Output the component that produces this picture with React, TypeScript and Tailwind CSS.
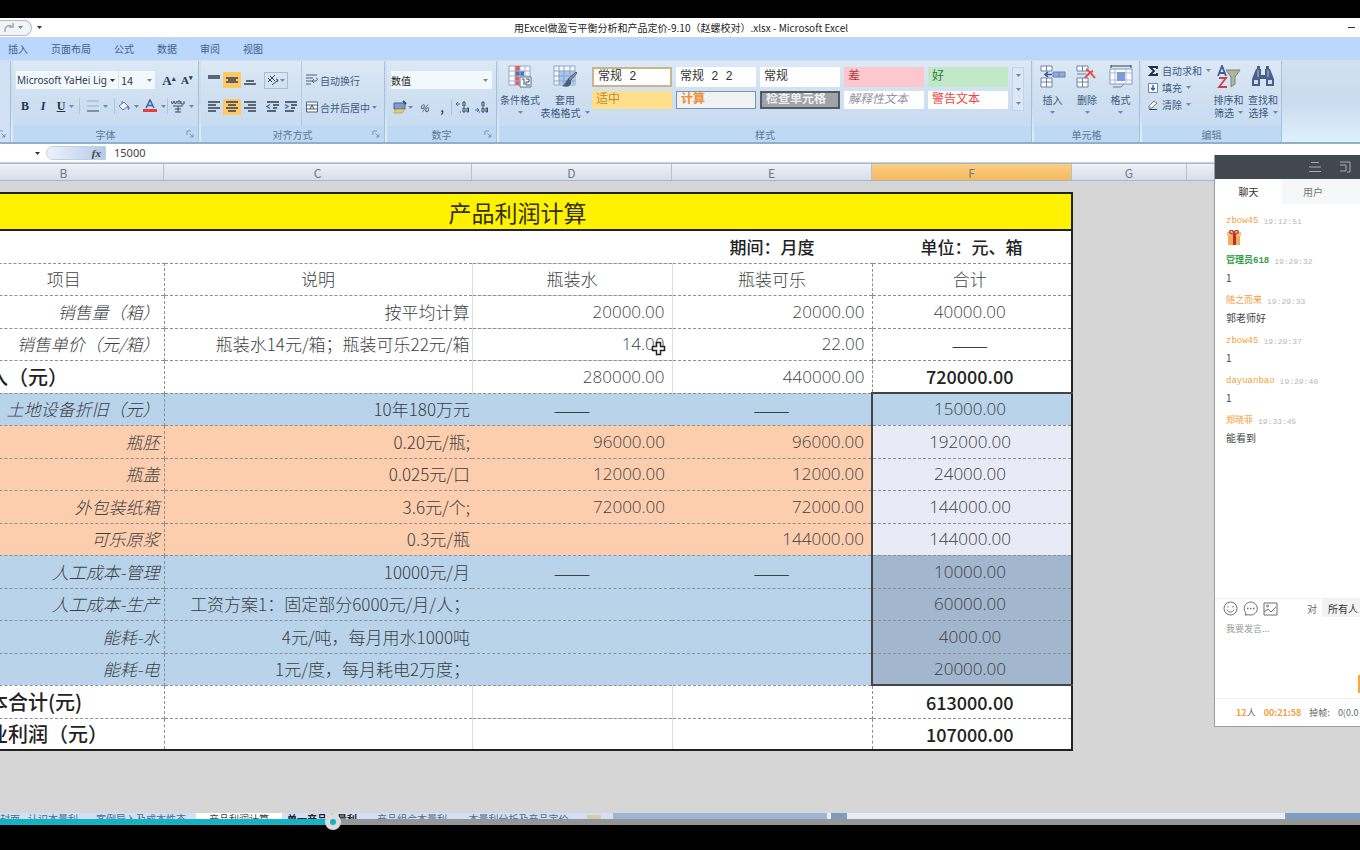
import React, { useState } from 'react';

type Tone = 'plain' | 'blue' | 'orange';

interface SheetRow {
    item: string;
    note?: string;
    water?: string;
    cola?: string;
    total?: string;
    tone: Tone;
    kind?: 'head' | 'sum';
    selected?: 'first' | 'middle' | 'last';
}

const DASH = '——';

const rows: SheetRow[] = [
    { item: '项目', note: '说明', water: '瓶装水', cola: '瓶装可乐', total: '合计', tone: 'plain', kind: 'head' },
    { item: '销售量（箱）', note: '按平均计算', water: '20000.00', cola: '20000.00', total: '40000.00', tone: 'plain' },
    { item: '销售单价（元/箱）', note: '瓶装水14元/箱；瓶装可乐22元/箱', water: '14.00', cola: '22.00', total: DASH, tone: 'plain' },
    { item: '收入（元）', water: '280000.00', cola: '440000.00', total: '720000.00', tone: 'plain', kind: 'sum' },
    { item: '土地设备折旧（元）', note: '10年180万元', water: DASH, cola: DASH, total: '15000.00', tone: 'blue', selected: 'first' },
    { item: '瓶胚', note: '0.20元/瓶;', water: '96000.00', cola: '96000.00', total: '192000.00', tone: 'orange', selected: 'middle' },
    { item: '瓶盖', note: '0.025元/口', water: '12000.00', cola: '12000.00', total: '24000.00', tone: 'orange', selected: 'middle' },
    { item: '外包装纸箱', note: '3.6元/个;', water: '72000.00', cola: '72000.00', total: '144000.00', tone: 'orange', selected: 'middle' },
    { item: '可乐原浆', note: '0.3元/瓶', cola: '144000.00', total: '144000.00', tone: 'orange', selected: 'middle' },
    { item: '人工成本-管理', note: '10000元/月', water: DASH, cola: DASH, total: '10000.00', tone: 'blue', selected: 'middle' },
    { item: '人工成本-生产', note: '工资方案1：固定部分6000元/月/人；', total: '60000.00', tone: 'blue', selected: 'middle' },
    { item: '能耗-水', note: '4元/吨，每月用水1000吨', total: '4000.00', tone: 'blue', selected: 'middle' },
    { item: '能耗-电', note: '1元/度，每月耗电2万度；', total: '20000.00', tone: 'blue', selected: 'last' },
    { item: '成本合计(元)', total: '613000.00', tone: 'plain', kind: 'sum' },
    { item: '营业利润（元）', total: '107000.00', tone: 'plain', kind: 'sum' },
];

const toneClass: Record<Tone, string> = {
    plain: 'bg-white',
    blue: 'bg-[#b8d3ea]',
    orange: 'bg-[#fdceae]',
};

const cellStyles = [
    { label: '常规 2', cls: 'bg-white border-2 border-[#c9b48c] text-[#333]' },
    { label: '常规 2 2', cls: 'bg-white text-[#333]' },
    { label: '常规', cls: 'bg-white text-[#333]' },
    { label: '差', cls: 'bg-[#fdc8cd] text-[#b3303c]' },
    { label: '好', cls: 'bg-[#c0e8c6] text-[#2f7a3f]' },
    { label: '适中', cls: 'bg-[#ffdf8c] text-[#bd8a2b]' },
    { label: '计算', cls: 'bg-[#f1f2f3] border border-[#7d93ad] text-[#f58a2c] font-bold' },
    { label: '检查单元格', cls: 'bg-[#a0a3a8] border-2 border-[#565a60] text-[#eef0f2] font-bold' },
    { label: '解释性文本', cls: 'bg-white text-[#8f9499] italic' },
    { label: '警告文本', cls: 'bg-white text-[#f0453f]' },
];

const messages = [
    { name: 'zbow45', time: '19:12:51', text: '', color: 'text-[#f2a13c]' },
    { name: '管理员618', time: '19:29:32', text: '1', color: 'text-[#2f9e45] font-bold' },
    { name: '随之而来', time: '19:29:33', text: '郭老师好', color: 'text-[#f2a13c]' },
    { name: 'zbow45', time: '19:29:37', text: '1', color: 'text-[#f2a13c]' },
    { name: 'dayuanbao', time: '19:29:40', text: '1', color: 'text-[#f2a13c]' },
    { name: '郑晓菲', time: '19:33:45', text: '能看到', color: 'text-[#f2a13c]' },
];

const Caret: React.FC<{ dark?: boolean }> = ({ dark }) => (
    <svg className="h-[3px] w-[5px] shrink-0" viewBox="0 0 5 3">
        <path d="M0 0h5L2.5 3z" fill={dark ? '#333' : '#7389a6'} />
    </svg>
);

const Sep = () => <span className="h-4 w-px shrink-0 bg-[#aec3dc]" />;

const Launcher = () => (
    <svg className="absolute right-1 bottom-1 h-2 w-2" viewBox="0 0 8 8" fill="none" stroke="#7f95b2">
        <path d="M1 5V1h4M3.500 3.500L7 7M7 4v3H4" />
    </svg>
);

interface GroupProps {
    label: string;
    width: string;
    launcher?: boolean;
    children?: React.ReactNode;
}

const Group: React.FC<GroupProps> = ({ label, width, launcher, children }) => (
    <section className={`relative flex shrink-0 flex-col border-r border-[#a9c0db] bg-gradient-to-b from-[#dce8f5] via-[#cddff1] to-[#c5dbf3] ${width}`}>
        <div className="flex flex-1">{children}</div>
        <div className="flex h-4 items-center justify-center bg-[#bfd8f4] text-[10px] text-[#5d7697]">{label}</div>
        {launcher && <Launcher />}
    </section>
);

// Three or four horizontal strokes, shared by all alignment buttons
const Lines: React.FC<{ rows: [number, number, number][] }> = ({ rows }) => (
    <svg className="h-3 w-[14px]" viewBox="0 0 14 12" stroke="#333d4d" strokeWidth="1.500">
        {rows.map(([x1, x2, y]) => <path key={y} d={`M${x1} ${y}H${x2}`} />)}
    </svg>
);

const alignTop: [number, number, number][] = [[1, 13, 2], [1, 13, 4]];
const alignMid: [number, number, number][] = [[1, 13, 4], [3, 11, 6], [1, 13, 8]];
const alignBottom: [number, number, number][] = [[3, 11, 7], [1, 13, 10]];
const alignLeft: [number, number, number][] = [[1, 13, 1], [1, 9, 4], [1, 13, 7], [1, 9, 10]];
const alignCenter: [number, number, number][] = [[1, 13, 1], [3, 11, 4], [1, 13, 7], [3, 11, 10]];
const alignRight: [number, number, number][] = [[1, 13, 1], [5, 13, 4], [1, 13, 7], [5, 13, 10]];

const Indent: React.FC<{ flip?: boolean }> = ({ flip }) => (
    <svg className="h-3 w-[14px]" viewBox="0 0 14 12" fill="none" stroke="#333d4d" strokeWidth="1.500">
        <path d="M1 1h12M7 4h6M7 7h4M1 10h9" />
        <path d={flip ? 'M1 3.500L4 5.500L1 7.500' : 'M4 3.500L1 5.500L4 7.500'} stroke="#4470ad" />
    </svg>
);

const AlignButton: React.FC<{ label: string; active?: boolean; children: React.ReactNode }> = ({ label, active, children }) => (
    <button aria-label={label} className={`flex h-4 w-[18px] items-center justify-center ${active ? 'bg-[#fdc866]' : ''}`}>
        {children}
    </button>
);

const BigButton: React.FC<{ icon: React.ReactNode; lines: string[]; width: string }> = ({ icon, lines, width }) => (
    <button className={`flex flex-col items-center pt-1 text-[10px] leading-[13px] text-[#3f597f] ${width}`}>
        {icon}
        <span className="mt-1 whitespace-nowrap">{lines[0]}</span>
        <span className="flex h-[13px] items-center gap-1 whitespace-nowrap">
            {lines[1]}
            <Caret />
        </span>
    </button>
);

const CondFormatIcon = () => (
    <svg className="h-6 w-6" viewBox="0 0 24 24">
        <path d="M1 1h21v19H1z" fill="#fff" stroke="#8fa5c4" />
        <path d="M7 1h5v5H7zM7 11h4v9H7z" fill="#ee5a55" />
        <path d="M7 6h9v5H7z" fill="#4c74b6" />
        <path d="M1 6h21M1 11h21M1 16h21M7 1v19M12 1v19M17 1v19" stroke="#9fb3ce" fill="none" />
        <path d="M12 12h11v10H12z" fill="#fff" stroke="#5a6f93" />
        <path d="M14 14h2v6M18 14h3v3h-3v3h4" fill="none" stroke="#33466b" />
    </svg>
);

const TableFormatIcon = () => (
    <svg className="h-6 w-6" viewBox="0 0 24 24">
        <path d="M1 1h21v19H1z" fill="#f5f9fe" stroke="#8fa5c4" />
        <path d="M6 6h16v14H6z" fill="#a9c8ef" />
        <path d="M1 6h21M1 11h21M1 16h21M6 1v19M11 1v19M17 1v19" stroke="#88a3c8" fill="none" />
        <path d="M24 8l-7 8-2-2 8-7z" fill="#8a8f98" stroke="#555f70" />
        <path d="M16 14c-3 0-3 5-7 7 5 2 10 0 9-5z" fill="#4b5e80" />
    </svg>
);

const InsertIcon = () => (
    <svg className="h-6 w-7" viewBox="0 0 28 24" fill="#fff" stroke="#6d82a3">
        <path d="M2 1h11v5H2zM2 13h11v9H2zM7.500 1v5M7.500 13v9M2 17h11" />
        <path d="M14 7h12v5H14zM20 7v5" fill="#8eabdc" stroke="#6580b3" />
        <path d="M13 9.500H6m3-2.500L6 9.500 9 12" fill="none" stroke="#35558e" strokeWidth="1.500" />
    </svg>
);

const DeleteIcon = () => (
    <svg className="h-6 w-6" viewBox="0 0 24 24" fill="#fff" stroke="#6d82a3">
        <path d="M2 1h11v5H2zM2 13h11v9H2zM7.500 1v5M7.500 13v9M2 17h11M2 9h9" />
        <path d="M11 4c3 2 6 5 9 9M18 6c-3 1-5 3-8 7" fill="none" stroke="#ea4b45" strokeWidth="2" />
    </svg>
);

const FormatIcon = () => (
    <svg className="h-6 w-6" viewBox="0 0 24 24">
        <path d="M2 1h20M2 0v3M22 0v3" stroke="#33415c" fill="none" />
        <path d="M1 4h22v15H1z" fill="#fff" stroke="#8096b8" />
        <path d="M6 4v15M17 4v15M1 8h22M1 15h22" stroke="#a9bbd4" />
        <path d="M8 7h8v9H8z" fill="#7d9adb" />
        <path d="M4 22h8l3-3" stroke="#6d7f9a" fill="none" />
    </svg>
);

const SortIcon = () => (
    <svg className="h-6 w-6" viewBox="0 0 24 24" fill="none">
        <path d="M9 5h14l-5 7v7l-4 3V12z" fill="#b1b39e" stroke="#80836f" />
        <path d="M1 11L5 1l4 10M3 8h5" stroke="#3d5ba0" strokeWidth="1.800" />
        <path d="M2 13h7l-7 9h8" stroke="#cf3f4a" strokeWidth="1.800" />
    </svg>
);

const FindIcon = () => (
    <svg className="h-6 w-6" viewBox="0 0 24 24" fill="#4c5f86">
        <path d="M5 4h5v6h4V4h5l4 10v7h-8v-7H9v7H1v-7z" />
        <path d="M6 1h3v3H6zM15 1h3v3h-3z" />
        <path d="M3 15h4v4H3zM17 15h4v4h-4z" fill="#cfdcf0" />
        <path d="M7 5v7M17 5v7" stroke="#b7c6e0" />
    </svg>
);

const Ribbon: React.FC = () => (
    <div className="flex h-[82px] gap-[2px] overflow-hidden bg-gradient-to-b from-[#d3e1f0] via-[#c9dbee] to-[#dff0fd] pt-px text-[#3f597f]">
        <section className="relative w-[11px] shrink-0 border-r border-[#a9c0db] bg-[#d0e1f3]">
            <Launcher />
        </section>
        <Group label="字体" width="w-[186px]" launcher>
            <div className="flex flex-1 flex-col gap-2 pt-[10px] pl-[3px]">
                <div className="flex h-[18px] items-center text-[#2b3a50]">
                    <label className="relative flex h-full w-[102px] items-center bg-[#f3f8fd] font-['Noto_Sans'] text-[10px]">
                        <select aria-label="字体" className="w-full appearance-none pl-px">
                            <option>Microsoft YaHei Lig</option>
                        </select>
                        <span className="absolute right-[3px]"><Caret dark /></span>
                    </label>
                    <label className="relative ml-px flex h-full w-9 items-center bg-[#f3f8fd] text-[11px]">
                        <select aria-label="字号" className="w-full appearance-none pl-[2px]">
                            <option>14</option>
                        </select>
                        <span className="absolute right-[3px]"><Caret /></span>
                    </label>
                    <button className="ml-[5px] w-[18px] font-['Liberation_Serif'] text-[13px] leading-none font-bold">A<sup className="text-[7px]">▴</sup></button>
                    <button className="w-[18px] font-['Liberation_Serif'] text-[11px] leading-none font-bold">A<sup className="text-[7px]">▾</sup></button>
                </div>
                <div className="flex h-[18px] items-center font-['Liberation_Serif'] text-[12px] text-[#26344b]">
                    <button className="w-[18px] font-bold">B</button>
                    <button className="w-[18px] font-bold italic">I</button>
                    <button className="flex w-[27px] items-center justify-center gap-1 font-bold underline">U<Caret /></button>
                    <Sep />
                    <button aria-label="边框" className="flex w-[34px] items-center justify-center gap-1">
                        <svg className="h-3 w-3" viewBox="0 0 12 12" fill="none" stroke="#9aaec8">
                            <path d="M0 1h12M0 6h12" />
                            <path d="M0 11h12" stroke="#3a475c" />
                        </svg>
                        <Caret />
                    </button>
                    <Sep />
                    <button aria-label="填充颜色" className="flex w-[26px] items-center justify-center gap-1">
                        <svg className="h-3 w-3" viewBox="0 0 12 12" fill="#eef4fb" stroke="#60789c">
                            <path d="M1 6l5-4 4 4-5 4zM4 4V1" />
                            <path d="M10 6c2 2 1 4 0 3z" fill="#4d74b8" />
                        </svg>
                        <Caret />
                    </button>
                    <button aria-label="字体颜色" className="flex w-[26px] items-center justify-center gap-1">
                        <svg className="h-[14px] w-[14px]" viewBox="0 0 14 14" fill="none">
                            <path d="M3 9l4-8 4 8M4.500 6.500h5" stroke="#3f62a8" strokeWidth="1.600" />
                            <path d="M0 10h14v3H0z" fill="#ee3b3b" />
                        </svg>
                        <Caret />
                    </button>
                    <Sep />
                    <button aria-label="拼音" className="flex w-[29px] items-center justify-center gap-1">
                        <svg className="h-[14px] w-[14px]" viewBox="0 0 14 14" fill="none" stroke="#3d4a60">
                            <path d="M0 2l1.500 3L3 2l1.500 3L6 2M7 5V2h2v3M10 2v3h3V2M2 7h10M7 7v6M4 10h6M4 13h6" />
                        </svg>
                        <Caret />
                    </button>
                </div>
            </div>
        </Group>
        <Group label="对齐方式" width="w-[184px]" launcher>
            <div className="flex flex-col gap-[11px] pt-[11px] pl-1">
                <div className="flex h-4 items-center">
                    <AlignButton label="顶端对齐"><Lines rows={alignTop} /></AlignButton>
                    <AlignButton label="垂直居中" active><Lines rows={alignMid} /></AlignButton>
                    <AlignButton label="底端对齐"><Lines rows={alignBottom} /></AlignButton>
                    <button aria-label="方向" className="ml-[5px] flex h-[17px] w-6 items-center justify-center gap-px border border-[#a9bdd7]">
                        <svg className="h-3 w-3" viewBox="0 0 12 12" fill="none" stroke="#3d4a60">
                            <path d="M1 4l4 4M3 2l5 5M1 8L8 1M5 11l6-5M9 5l2 1-1 2" />
                        </svg>
                        <Caret />
                    </button>
                </div>
                <div className="flex h-4 items-center">
                    <AlignButton label="左对齐"><Lines rows={alignLeft} /></AlignButton>
                    <AlignButton label="居中" active><Lines rows={alignCenter} /></AlignButton>
                    <AlignButton label="右对齐"><Lines rows={alignRight} /></AlignButton>
                    <span className="w-[5px]" />
                    <AlignButton label="减少缩进量"><Indent /></AlignButton>
                    <AlignButton label="增加缩进量"><Indent flip /></AlignButton>
                </div>
            </div>
            <div className="ml-px flex flex-col gap-[11px] border-l border-[#b6cae2] pt-[11px] pl-1 text-[10px]">
                <button className="flex h-4 items-center gap-[2px] whitespace-nowrap">
                    <svg className="h-3 w-3" viewBox="0 0 12 12" fill="none" stroke="#50617c">
                        <path d="M0 1h11M0 4h7M0 7h9c3 0 3-3 1-3M0 10h5M8 9L6 7l2-2" />
                    </svg>
                    自动换行
                </button>
                <button className="flex h-4 items-center gap-[2px] whitespace-nowrap">
                    <svg className="h-3 w-3" viewBox="0 0 12 12" fill="#fff" stroke="#50617c">
                        <path d="M0.500 1h11v10H.5zM.5 4h11M.5 8h11" />
                        <path d="M4 8l2-4 2 4" fill="none" stroke="#2a4880" />
                    </svg>
                    合并后居中
                    <Caret />
                </button>
            </div>
        </Group>
        <Group label="数字" width="w-[110px]" launcher>
            <div className="flex flex-1 flex-col gap-[10px] px-1 pt-[10px]">
                <label className="relative flex h-[18px] items-center bg-[#f3f8fd] text-[10px] text-[#222]">
                    <select aria-label="数字格式" className="w-full appearance-none">
                        <option>数值</option>
                    </select>
                    <span className="absolute right-1"><Caret /></span>
                </label>
                <div className="flex h-4 items-center text-[10px] text-[#26344b]">
                    <button aria-label="会计数字格式" className="flex w-6 items-center justify-center gap-px">
                        <svg className="h-[14px] w-[14px]" viewBox="0 0 14 14">
                            <path d="M1 3h11v6H1z" fill="#7e9bd0" stroke="#4a628f" />
                            <path d="M3 9h9l-3 4H1z" fill="#e6cb6c" stroke="#a68f44" strokeWidth=".6" />
                            <path d="M10 1l3 3" stroke="#3f4f6d" strokeWidth="2" />
                        </svg>
                        <Caret />
                    </button>
                    <button className="w-[18px] italic">%</button>
                    <button className="w-[18px] font-bold">,</button>
                    <Sep />
                    {['增加小数位数', '减少小数位数'].map((label, i) => (
                        <button key={label} aria-label={label} className="flex w-[19px] justify-center">
                            <svg className="h-3 w-[14px]" viewBox="0 0 14 12" fill="none" stroke="#36465f">
                                <path d={i === 0 ? 'M5 3H1m2-2L1 3l2 2' : 'M1 9h4M3 7l2 2-2 2'} stroke="#3f68ae" />
                                <path d="M8 1h2v4H8zM8 7h2v4H8zM12 7h1.500v4H12zM5 11h1" />
                            </svg>
                        </button>
                    ))}
                </div>
            </div>
        </Group>
        <Group label="样式" width="w-[533px]">
            <BigButton icon={<CondFormatIcon />} lines={['条件格式', '']} width="w-[42px]" />
            <BigButton icon={<TableFormatIcon />} lines={['套用', '表格格式']} width="w-[48px]" />
            <div className="ml-[3px] grid grid-cols-[repeat(5,80px)] grid-rows-[20px_18px] content-start gap-x-1 gap-y-[4px] pt-[6px]">
                {cellStyles.map((s) => (
                    <button key={s.label} className={`flex items-center overflow-hidden pl-1 font-['Liberation_Mono','Noto_Sans_CJK_SC',monospace] text-[12px] leading-none whitespace-pre ${s.cls}`}>
                        {s.label}
                    </button>
                ))}
            </div>
            <div className="mt-[6px] ml-1 flex h-[44px] w-[12px] flex-col items-center justify-around self-start border border-[#c3d4e8] bg-[#dbe7f4]">
                <Caret /><Caret /><Caret />
            </div>
        </Group>
        <Group label="单元格" width="w-[106px]">
            <BigButton icon={<InsertIcon />} lines={['插入', '']} width="w-[37px]" />
            <BigButton icon={<DeleteIcon />} lines={['删除', '']} width="w-[32px]" />
            <BigButton icon={<FormatIcon />} lines={['格式', '']} width="w-[35px]" />
        </Group>
        <Group label="编辑" width="w-[140px]">
            <div className="flex w-[69px] flex-col pt-px pl-[6px] text-[10px]">
                <button className="flex h-[17px] items-center gap-1 whitespace-nowrap">
                    <svg className="h-[10px] w-[10px]" viewBox="0 0 10 10" fill="none" stroke="#222f45" strokeWidth="1.800">
                        <path d="M9 3V1H2l4 4-4 4h7V7" />
                    </svg>
                    自动求和<Caret />
                </button>
                <button className="flex h-[17px] items-center gap-1">
                    <svg className="h-[10px] w-[10px]" viewBox="0 0 10 10">
                        <path d="M.5.5h9v9h-9z" fill="#fff" stroke="#6c84aa" />
                        <path d="M5 2v5M3 5l2 2 2-2" stroke="#3060b5" strokeWidth="1.500" fill="none" />
                    </svg>
                    填充<Caret />
                </button>
                <button className="flex h-[17px] items-center gap-1">
                    <svg className="h-[10px] w-[10px]" viewBox="0 0 10 10">
                        <path d="M1 6l5-5 3 2-5 5H1z" fill="#fff" stroke="#66799a" />
                        <path d="M1 9.500h8" stroke="#33415c" />
                    </svg>
                    清除<Caret />
                </button>
            </div>
            <BigButton icon={<SortIcon />} lines={['排序和', '筛选']} width="w-[35px]" />
            <BigButton icon={<FindIcon />} lines={['查找和', '选择']} width="w-[34px]" />
        </Group>
    </div>
);

const ColumnHeads: React.FC = () => {
    const base = 'shrink-0 border-r border-[#b4c0cf] text-center';
    return (
        <div className="overflow-hidden border-y border-[#a5b7ca] bg-gradient-to-b from-[#eef1f6] to-[#d7dfe9]">
            <div className="-ml-9 flex h-4 text-[12px] leading-[17px] text-[#6f7986]">
                <div className={`w-[200px] ${base}`}>B</div>
                <div className={`w-[308px] ${base}`}>C</div>
                <div className={`w-[200px] ${base}`}>D</div>
                <div className={`w-[200px] ${base}`}>E</div>
                <div className={`w-[200px] bg-gradient-to-b from-[#fbcf86] to-[#f5ba5c] ${base}`}>F</div>
                <div className={`w-[115px] ${base}`}>G</div>
            </div>
        </div>
    );
};

const edge: Record<'first' | 'middle' | 'last', string> = {
    first: 'border-t-2 border-l-2 border-t-[#444] border-l-[#444] [border-top-style:solid] [border-left-style:solid]',
    middle: 'border-l-2 border-l-[#444] [border-left-style:solid]',
    last: 'border-l-2 border-b-2 border-l-[#444] border-b-[#444] [border-bottom-style:solid] [border-left-style:solid]',
};

const totalFill = (row: SheetRow) => {
    if (!row.selected) return toneClass[row.tone];
    if (row.tone === 'orange') return 'bg-[#e8eaf6]';
    return row.selected === 'first' ? 'bg-[#b8d3ea]' : 'bg-[#a2b6cd]';
};

const valueAlign = (row: SheetRow, value?: string) => {
    if (row.kind === 'head') return 'text-center';
    return value === DASH ? 'text-center text-[22px]' : `text-right pr-[7px] ${numberFont}`;
};

const numberFont = "font-['Open_Sans','Noto_Sans_CJK_SC',sans-serif]";

const SheetTable: React.FC = () => (
    <table className="-ml-[38px] w-[1109px] table-fixed border-collapse border-2 border-[#222] text-[17px] leading-6 font-light text-[#3c3f44]">
        <colgroup>
            <col className="w-[201px]" />
            <col className="w-[308px]" />
            <col className="w-[200px]" />
            <col className="w-[200px]" />
            <col className="w-[200px]" />
        </colgroup>
        <thead>
            <tr className="h-[37px] border-b-2 border-[#222] bg-[#fff200]">
                <th colSpan={5} className="p-0 text-center text-[23px] font-normal text-[#33300a]">产品利润计算</th>
            </tr>
            <tr className="h-[33px] bg-white font-medium text-[#222]">
                <td colSpan={3} className="p-0" />
                <td className="p-0 text-center">期间：月度</td>
                <td className="p-0 text-center">单位：元、箱</td>
            </tr>
        </thead>
        <tbody>
            {rows.map((row, i) => {
                const base = 'border-t border-dashed border-t-[#8d8f96] p-0 whitespace-nowrap';
                const cell = `${base} ${toneClass[row.tone]}`;
                const line = row.tone === 'plain' ? 'border-r border-r-[#dcdcdf] [border-right-style:solid]' : '';
                return (
                    <tr key={row.item} className={i % 2 ? 'h-[33px]' : 'h-8'}>
                        <td
                            className={`${cell} border-r border-r-[#8d8f96] ${
                                row.kind === 'head' ? 'text-center' : row.kind === 'sum' ? 'pl-1 text-[20px] font-medium text-[#222]' : 'pr-1 text-right italic'
                            }`}
                        >
                            {row.item}
                        </td>
                        <td className={`${cell} ${line} ${row.kind === 'head' ? 'text-center' : 'pr-[2px] text-right'}`}>{row.note}</td>
                        <td className={`relative ${cell} ${line} ${valueAlign(row, row.water)}`}>
                            {row.water}
                            {row.water === '14.00' && (
                                <svg className="absolute top-3 right-[5px] h-4 w-4" viewBox="0 0 16 16">
                                    <path d="M5.500 1.500h4v4h4v4h-4v4h-4v-4h-4v-4h4z" fill="#fff" stroke="#222" strokeWidth="1.500" />
                                </svg>
                            )}
                        </td>
                        <td className={`${cell} ${valueAlign(row, row.cola)}`}>{row.cola}</td>
                        <td
                            className={`${base} border-l pr-1 text-center ${totalFill(row)} ${
                                row.total === DASH ? 'text-[22px]' : row.kind === 'sum' ? 'text-[18px] font-medium text-[#222]' : row.kind === 'head' ? '' : numberFont
                            } ${row.selected ? edge[row.selected] : 'border-l-[#8d8f96]'}`}
                        >
                            {row.total}
                        </td>
                    </tr>
                );
            })}
        </tbody>
    </table>
);

const GiftIcon = () => (
    <svg className="h-4 w-4" viewBox="0 0 16 16">
        <path d="M2 5h12v10H2z" fill="#f9a95c" />
        <path d="M1 2h14v4H1z" fill="#fbc07f" />
        <path d="M7 3h3v12H7z" fill="#b53427" />
        <path d="M8 4C5 4 3 3 4 1s4 0 4 3c0-3 3-5 4-3s-1 3-4 3z" fill="none" stroke="#c23c2c" strokeWidth="1.500" />
    </svg>
);

const ChatPanel: React.FC = () => {
    const [draft, setDraft] = useState('');
    return (
        <aside className="absolute top-[137px] right-0 flex h-[572px] w-[146px] flex-col overflow-hidden border-b border-l border-[#9a9ea3] bg-white">
            <div className="flex h-6 items-center justify-end gap-[18px] bg-[#42484f] pr-[9px]">
                <svg className="h-3 w-3" viewBox="0 0 12 12" stroke="#a8adb3"><path d="M2 1.500h8M0 6h12M0 10.500h12" /></svg>
                <svg className="h-3 w-3" viewBox="0 0 12 12" fill="none" stroke="#a8adb3"><path d="M1 1h10v10H8M1 4h6v6H1" /></svg>
            </div>
            <div role="tablist" className="flex h-[25px] text-[10px]">
                <button role="tab" aria-selected="true" className="w-[67px] text-[#333]">聊天</button>
                <button role="tab" aria-selected="false" className="flex-1 bg-[#f6f7f8] pr-4 text-[#777]">用户</button>
            </div>
            <ul className="flex flex-1 flex-col pt-[10px] pl-[11px]">
                {messages.map((m) => (
                    <li key={m.time} className="h-10">
                        <div className="flex h-4 items-center gap-[5px] font-['Liberation_Mono','Noto_Sans_CJK_SC',monospace] whitespace-nowrap">
                            <span className={`text-[9px] ${m.color}`}>{m.name}</span>
                            <span className="text-[8px] text-[#b5b8bd]">{m.time}</span>
                        </div>
                        {m.text ? <p className="text-[10px] leading-4 text-[#444]">{m.text}</p> : <GiftIcon />}
                    </li>
                ))}
            </ul>
            <div className="flex items-center border-t border-[#f0f0f1] text-[10px] text-[#666]">
                <div className="flex gap-[5px] pl-2">
                    <button aria-label="表情">
                        <svg className="h-[15px] w-[15px]" viewBox="0 0 15 15" fill="none" stroke="#6b6e73">
                            <circle cx="7.500" cy="7.500" r="6.500" />
                            <path d="M4 8.500c1 3.500 6 3.500 7 0M5 5v1.500M10 5v1.500" />
                        </svg>
                    </button>
                    <button aria-label="快捷回复">
                        <svg className="h-[15px] w-[15px]" viewBox="0 0 15 15" fill="none" stroke="#6b6e73">
                            <path d="M2 14l1-2A6.500 6.500 0 1 1 6 13.800z" />
                            <path d="M4 7.500h1.500M7 7.500h1.500M10 7.500h1.500" strokeWidth="1.500" />
                        </svg>
                    </button>
                    <button aria-label="图片">
                        <svg className="h-[15px] w-[15px]" viewBox="0 0 15 15" fill="none" stroke="#6b6e73">
                            <path d="M1 2h13v12H1zM1 11l4-3 3 3 5-5" />
                            <circle cx="4.500" cy="5" r="1" />
                        </svg>
                    </button>
                </div>
                <label htmlFor="target" className="ml-[29px]">对</label>
                <select id="target" className="ml-[5px] h-[18px] w-10 appearance-none bg-[#f3f3f4] pl-[6px] text-[#333]">
                    <option>所有人</option>
                </select>
            </div>
            <textarea
                aria-label="消息"
                value={draft}
                onChange={(e) => setDraft(e.target.value)}
                placeholder="我要发言..."
                className="h-[58px] resize-none overflow-hidden pt-1 pl-[11px] text-[9px] leading-4 outline-none placeholder:text-[#999]"
            />
            <button aria-label="发送" className="h-[18px] w-[2px] self-end bg-[#f7a93b]" />
            <div className="mt-[5px] flex h-7 items-center gap-2 border-t border-[#f0f0f1] pl-[21px] text-[9px] whitespace-nowrap text-[#666]">
                <span><b className="text-[#f2a13c]">12</b>人</span>
                <b className="text-[#f2a13c]">00:21:58</b>
                <span>掉帧:</span>
                <span>0(0.0</span>
            </div>
        </aside>
    );
};

const sheetTabs = [
    { name: '封面', cls: 'w-5 text-[#4b6a99]' },
    { name: '认识本量利', cls: 'w-[66px] text-[#4b6a99]' },
    { name: '案例导入及成本性态', cls: 'w-[110px] text-[#4b6a99]' },
    { name: '产品利润计算', cls: 'w-[86px] bg-white text-[#444]' },
    { name: '单一产品本量利', cls: 'w-[80px] font-bold text-[#222]' },
    { name: '产品组合本量利', cls: 'w-[100px] text-[#4b6a99]' },
    { name: '本量利分析及产品定价', cls: 'w-[113px] text-[#4b6a99]' },
];

const SheetTabs: React.FC = () => (
    <div className="flex h-[6px] shrink-0 overflow-hidden bg-[#e6edf8]">
        <div className="flex items-start bg-[#d3dff3] text-[10px] leading-3">
            {sheetTabs.map((tab) => (
                <button key={tab.name} className={`h-3 shrink-0 whitespace-nowrap ${tab.cls}`}>{tab.name}</button>
            ))}
            <span className="mx-3 mt-[2px] h-1 w-[14px] bg-[#d3cdae]" />
        </div>
        <div className="w-[214px] bg-[#9db6d6]" />
        <div className="ml-1 w-4 bg-[#7f9bbd]" />
        <div className="flex-1" />
        <div className="w-[75px] bg-[#7b9fc8]" />
    </div>
);

const App: React.FC = () => {
    const [position, setPosition] = useState(242);

    return (
        <div className="flex h-screen flex-col overflow-hidden bg-black pt-[18px] font-['Noto_Sans_CJK_SC','Noto_Sans',sans-serif]">
            <div className="relative flex min-h-0 flex-1 flex-col bg-[#d6d6d7]">
                <header className="flex h-[19px] shrink-0 items-center bg-white">
                    <div className="flex h-4 w-8 items-center gap-1 rounded-r-full border border-l-0 border-[#b5b9c0] bg-[#f1f3f6] pl-1">
                        <svg className="h-[10px] w-[10px]" viewBox="0 0 10 10" fill="none" stroke="#a6abb5" strokeWidth="1.500"><path d="M1 9C0 3 5 1 9 4M9 0v4H5" /></svg>
                        <Caret />
                    </div>
                    <span className="ml-[5px]"><Caret dark /></span>
                    <h1 className="flex-1 pr-7 text-center text-[10px] leading-none text-[#222]">用Excel做盈亏平衡分析和产品定价-9.10（赵螺校对）.xlsx - Microsoft Excel</h1>
                    <button aria-label="最小化" className="mr-[5px] h-px w-[7px] bg-[#333]" />
                </header>

                <nav className="flex h-[23px] shrink-0 items-center gap-[23px] bg-[#bbd7fb] pl-2 text-[10px] text-[#44628f]">
                    {['插入', '页面布局', '公式', '数据', '审阅', '视图'].map((t) => (
                        <button key={t}>{t}</button>
                    ))}
                </nav>

                <Ribbon />

                <div className="flex h-[21px] shrink-0 items-center border-t-2 border-b border-t-[#8fb0c6] border-b-[#c9d3df] bg-white text-[#444]">
                    <span className="w-[46px] pl-[35px]"><Caret dark /></span>
                    <span className="flex h-[14px] w-[60px] items-center justify-end rounded-l-full border border-[#c2cfe2] bg-gradient-to-r from-[#eef3fa] to-[#b4cae9] pr-1 font-['Liberation_Serif'] text-[11px] font-bold italic">fx</span>
                    <input aria-label="编辑栏" defaultValue="15000" className="ml-2 h-4 flex-1 font-['Noto_Sans'] text-[11px] outline-none" />
                </div>

                <ColumnHeads />

                <main className="min-h-0 flex-1 overflow-hidden pt-[11px]">
                    <SheetTable />
                </main>

                <SheetTabs />
                <ChatPanel />
            </div>

            <input
                type="range"
                aria-label="播放进度"
                min={0}
                max={1000}
                value={position}
                onChange={(e) => setPosition(Number(e.target.value))}
                style={{ backgroundImage: `linear-gradient(to right, #13b3c3 ${position / 10}%, #969696 ${position / 10}%)` }}
                className="relative block h-[6px] w-full shrink-0 appearance-none [&::-webkit-slider-runnable-track]:h-[6px] [&::-webkit-slider-thumb]:-mt-[5px] [&::-webkit-slider-thumb]:h-4 [&::-webkit-slider-thumb]:w-4 [&::-webkit-slider-thumb]:appearance-none [&::-webkit-slider-thumb]:rounded-full [&::-webkit-slider-thumb]:border-[5px] [&::-webkit-slider-thumb]:border-[#dcdcdc] [&::-webkit-slider-thumb]:bg-[#13b3c3]"
            />
            <div className="h-[25px] shrink-0 bg-black" />
        </div>
    );
};

export default App;
